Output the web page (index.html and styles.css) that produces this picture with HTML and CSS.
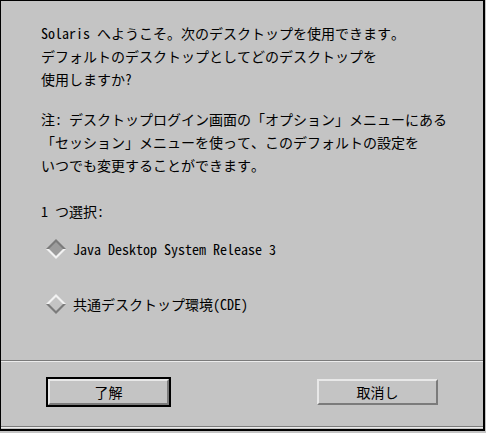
FILE: index.html
```html
<!DOCTYPE html>
<html lang="ja">
<head>
<meta charset="utf-8">
<title>Solaris</title>
<link rel="stylesheet" href="styles.css">
</head>
<body>
<div class="window">
  <div class="content">
    <p class="para">Solaris へようこそ。次のデスクトップを使用できます。<br>デフォルトのデスクトップとしてどのデスクトップを<br>使用しますか?</p>
    <p class="para note">注: デスクトップログイン画面の「オプション」メニューにある<br>「セッション」メニューを使って、このデフォルトの設定を<br>いつでも変更することができます。</p>
    <p class="para choose">1 つ選択:</p>
    <div class="options">
      <div class="option">
        <svg class="diamond" width="20" height="20" viewBox="0 0 20 20"><polygon points="0,10 10,0 20,10" fill="#7b7b7b"/><polygon points="0,10 10,20 20,10" fill="#f2f2f2"/><polygon points="3,10 10,3 17,10 10,17" fill="#9c9c9c"/></svg>
        <span>Java Desktop System Release 3</span>
      </div>
      <div class="option">
        <svg class="diamond" width="20" height="20" viewBox="0 0 20 20"><polygon points="0,10 10,0 20,10" fill="#f2f2f2"/><polygon points="0,10 10,20 20,10" fill="#7b7b7b"/><polygon points="3,10 10,3 17,10 10,17" fill="#c4c4c4"/></svg>
        <span>共通デスクトップ環境(CDE)</span>
      </div>
    </div>
  </div>
  <div class="sep"></div>
  <div class="actions">
    <div class="default-ring"><button class="btn">了解</button></div>
    <button class="btn">取消し</button>
  </div>
  <div class="sep"></div>
</div>
</body>
</html>
```
FILE: styles.css
```css
html, body {
  margin: 0;
  padding: 0;
}
body {
  width: 486px;
  height: 433px;
  overflow: hidden;
  background: #c4c4c4;
  color: #000;
  font-family: "Noto Sans Mono CJK JP", "Noto Sans CJK JP", monospace;
  font-size: 14px;
}
.window {
  box-sizing: border-box;
  width: 485px;
  height: 431px;
  border-style: solid;
  border-color: #000;
  border-width: 1px 2px 2px 1px;
  padding-bottom: 1px;
  display: flex;
  flex-direction: column;
  background: #c4c4c4;
}
.content {
  flex: 1;
  padding: 21px 0 0 40px;
}
.para {
  margin: 0;
  line-height: 23px;
  white-space: nowrap;
}
.note {
  margin-top: 17px;
}
.choose {
  margin-top: 23px;
}
.options {
  display: flex;
  flex-direction: column;
  gap: 32px;
  margin-top: 14px;
  padding-left: 5px;
}
.option {
  display: flex;
  align-items: center;
  gap: 7px;
  height: 23px;
  white-space: nowrap;
}
.diamond {
  display: block;
  flex: none;
}
.sep {
  height: 0;
  border-top: 1px solid #7b7b7b;
  border-bottom: 1px solid #ececec;
}
.actions {
  box-sizing: border-box;
  height: 64px;
  display: flex;
  align-items: center;
  padding: 0 0 4px 45px;
  gap: 146px;
}
.default-ring {
  border: 2px solid #000;
  display: flex;
}
.btn {
  box-sizing: border-box;
  width: 121px;
  height: 26px;
  margin: 0;
  padding: 0;
  border: 2px solid;
  border-color: #e8e8e8 #7b7b7b #7b7b7b #e8e8e8;
  background: #c4c4c4;
  color: #000;
  font-family: inherit;
  font-size: 14px;
  line-height: 22px;
}
```
